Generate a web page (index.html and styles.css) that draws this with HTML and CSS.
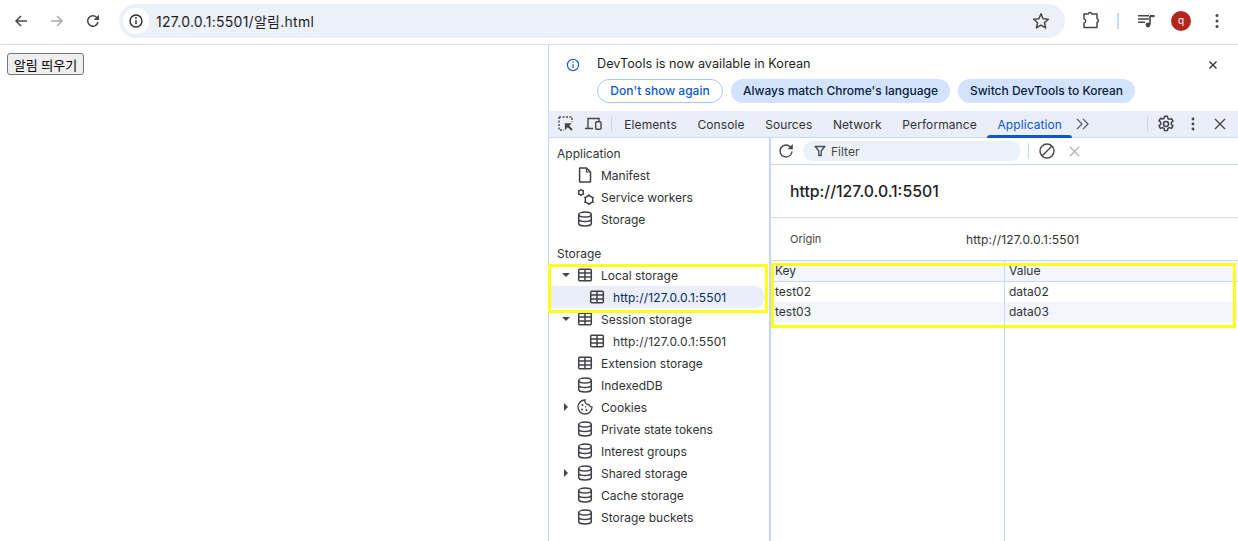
FILE: index.html
```html
<!DOCTYPE html>
<html lang="ko">
<head>
<meta charset="utf-8">
<title>알림</title>
<link rel="stylesheet" href="styles.css">
</head>
<body>
<svg class="defs" width="0" height="0" aria-hidden="true">
  <symbol id="db" viewBox="0 0 16 16"><g fill="none" stroke="#3f4145" stroke-width="1.500"><ellipse cx="8" cy="3.600" rx="6.300" ry="2.500"/><path d="M1.700 3.600v8.800c0 1.300 2.800 2.500 6.300 2.500s6.300-1.200 6.300-2.500V3.600M1.700 8c0 1.400 2.800 2.500 6.300 2.500s6.300-1.100 6.300-2.500"/></g></symbol>
  <symbol id="grid" viewBox="0 0 16 16"><g fill="none" stroke="#3f4145" stroke-width="1.500"><rect x="1.700" y="2.200" width="12.600" height="11.600" rx="1"/><path d="M1.700 6h12.600M1.700 10h12.600M8 2.200v11.600"/></g></symbol>
</svg>

<header class="toolbar">
  <svg class="nav back" width="16" height="16" viewBox="0 0 16 16"><path d="M14 8H3M8 3 3 8l5 5" fill="none" stroke="#474747" stroke-width="1.500"/></svg>
  <svg class="nav fwd" width="16" height="16" viewBox="0 0 16 16"><path d="M2 8h11M8 3l5 5-5 5" fill="none" stroke="#a8abb0" stroke-width="1.500"/></svg>
  <svg class="nav reload" width="16" height="16" viewBox="0 0 16 16"><path d="M13 9a5.200 5.200 0 1 1-1.300-4.600L13.500 6" fill="none" stroke="#474747" stroke-width="1.500"/><path d="M14 1.700V7H8.700z" fill="#474747"/></svg>
  <div class="omnibox">
    <span class="site-info"><svg width="16" height="16" viewBox="0 0 16 16"><circle cx="8" cy="8" r="6" fill="none" stroke="#2b2d30" stroke-width="1.400"/><path d="M8 7.300v4" stroke="#2b2d30" stroke-width="1.500"/><circle cx="8" cy="5" r=".9" fill="#2b2d30"/></svg></span>
    <span class="url">127.0.0.1:5501/알림.html</span>
    <svg class="star" width="18" height="18" viewBox="0 0 18 18"><path d="m9 1.800 2.100 4.900 5.300.5-4 3.500 1.200 5.200L9 13.200l-4.600 2.700 1.200-5.200-4-3.500 5.300-.5z" fill="none" stroke="#474747" stroke-width="1.500" stroke-linejoin="round"/></svg>
  </div>
  <svg class="ext" width="18" height="18" viewBox="0 0 18 18"><path d="M2 2.500h4.200a2 2 0 0 1 3.800 0h5v4.600a2 2 0 0 1 0 3.800V16H2v-4.200a2.300 2.300 0 0 0 0-4.400z" transform="translate(0 -.5)" fill="none" stroke="#474747" stroke-width="1.500" stroke-linejoin="round"/></svg>
  <span class="tb-sep"></span>
  <svg class="media" width="18" height="16" viewBox="0 0 18 16"><path d="M0 2.800h11M0 6h11M0 9.200h7" stroke="#474747" stroke-width="1.400"/><path d="M12 3v8.500" stroke="#474747" stroke-width="1.600"/><path d="M12 2h4.500v2.200H12z" fill="#474747"/><circle cx="10" cy="12" r="2.400" fill="#474747"/></svg>
  <span class="avatar">q</span>
  <svg class="kebab" width="4" height="16" viewBox="0 0 4 16"><circle cx="2" cy="2.500" r="1.500" fill="#474747"/><circle cx="2" cy="8" r="1.500" fill="#474747"/><circle cx="2" cy="13.500" r="1.500" fill="#474747"/></svg>
</header>

<main class="layout">
  <section class="page"><button class="demo-btn" type="button">알림 띄우기</button></section>

  <section class="devtools">
    <div class="infobar">
      <div class="info-line">
        <svg class="info-icon" width="14" height="14" viewBox="0 0 14 14"><circle cx="7" cy="7" r="5.600" fill="none" stroke="#1f5fd6" stroke-width="1.200"/><path d="M7 6.300v3.700" stroke="#1f5fd6" stroke-width="1.300"/><circle cx="7" cy="4.300" r=".8" fill="#1f5fd6"/></svg>
        <span class="info-text">DevTools is now available in Korean</span>
        <svg class="info-close" width="10" height="10" viewBox="0 0 10 10"><path d="m1.500 1.500 7 7m0-7-7 7" stroke="#303236" stroke-width="1.400"/></svg>
      </div>
      <div class="info-actions">
        <button class="pill outline" type="button">Don't show again</button>
        <button class="pill tonal" type="button">Always match Chrome's language</button>
        <button class="pill tonal" type="button">Switch DevTools to Korean</button>
      </div>
    </div>

    <nav class="tabbar">
      <svg class="tb-icon inspect" width="16" height="16" viewBox="0 0 16 16"><path d="M1 1h13v5M1 1v13h5" fill="none" stroke="#474747" stroke-width="1.400" stroke-dasharray="2 1.500"/><path d="M7 7h7l-2.500 2.500L15 13l-1.500 1.500-3.500-3.500L7 14z" fill="#474747" transform="translate(0 .5) scale(.98)"/></svg>
      <svg class="tb-icon device" width="17" height="16" viewBox="0 0 17 16"><path d="M3 12V2.500h11V5" fill="none" stroke="#474747" stroke-width="1.400"/><path d="M0 12.500h8" stroke="#474747" stroke-width="1.500"/><rect x="10.700" y="5.700" width="5.300" height="7.600" rx="1" fill="none" stroke="#474747" stroke-width="1.400"/></svg>
      <span class="tab-sep"></span>
      <span class="tab">Elements</span>
      <span class="tab">Console</span>
      <span class="tab">Sources</span>
      <span class="tab">Network</span>
      <span class="tab">Performance</span>
      <span class="tab active">Application</span>
      <svg class="more" width="13" height="12" viewBox="0 0 13 12"><path d="m1 1 5 5-5 5M7 1l5 5-5 5" fill="none" stroke="#5b5e63" stroke-width="1.300"/></svg>
      <span class="tab-right">
        <span class="tab-sep"></span>
        <svg class="gear" width="18" height="18" viewBox="0 0 16 16"><circle cx="8" cy="8" r="2.200" fill="none" stroke="#3f4145" stroke-width="1.400"/><path d="M6.700 1.200h2.600l.4 2 1.300.7 1.900-.7 1.300 2.300-1.500 1.300v1.500l1.500 1.300-1.300 2.300-1.900-.7-1.300.7-.4 2H6.700l-.4-2-1.300-.7-1.900.7-1.300-2.300 1.500-1.300V6.500L1.800 5.200l1.300-2.300 1.900.7 1.300-.7z" fill="none" stroke="#3f4145" stroke-width="1.300" stroke-linejoin="round"/></svg>
        <svg class="dt-kebab" width="4" height="14" viewBox="0 0 4 14"><circle cx="2" cy="2" r="1.400" fill="#474747"/><circle cx="2" cy="7" r="1.400" fill="#474747"/><circle cx="2" cy="12" r="1.400" fill="#474747"/></svg>
        <svg class="dt-close" width="12" height="12" viewBox="0 0 12 12"><path d="m1 1 10 10M11 1 1 11" stroke="#474747" stroke-width="1.400"/></svg>
      </span>
    </nav>

    <div class="panel">
      <aside class="sidebar">
        <div class="group-title">Application</div>
        <div class="row"><span class="arrow"></span><svg class="ri" width="16" height="16" viewBox="0 0 16 16"><path d="M2.600 1h6.900l4 4v10h-10.900z" fill="none" stroke="#3f4145" stroke-width="1.500" stroke-linejoin="round"/><path d="M9.500 1v4h4" fill="none" stroke="#3f4145" stroke-width="1.200"/></svg><span>Manifest</span></div>
        <div class="row"><span class="arrow"></span><svg class="ri" width="16" height="16" viewBox="0 0 16 16"><path d="M4 .9 6.300 2.200v2.600L4 6.100 1.700 4.800V2.200zM12 6.500l3.700 2.100v4.300L12 15l-3.700-2.100V8.600z" fill="none" stroke="#3f4145" stroke-width="1.500" stroke-linejoin="round"/><path d="M4 0v1M4 6v1M1 1.500l1 .6M6 4.900l1 .6M7 1.500l-1 .6M2 4.900l-1 .6M12 5v1.500M12 15v1M7 8l1.300.7M15.700 12.900 17 13.600M17 8l-1.300.7M8.300 12.900 7 13.600" stroke="#3f4145" stroke-width="1"/></svg><span>Service workers</span></div>
        <div class="row"><span class="arrow"></span><svg class="ri" width="16" height="16"><use href="#db"/></svg><span>Storage</span></div>
        <div class="group-title second">Storage</div>
        <div class="row"><span class="arrow down"></span><svg class="ri" width="16" height="16"><use href="#grid"/></svg><span>Local storage</span></div>
        <div class="row child selected"><svg class="ri" width="16" height="16"><use href="#grid"/></svg><span class="num">http://127.0.0.1:5501</span></div>
        <div class="row"><span class="arrow down"></span><svg class="ri" width="16" height="16"><use href="#grid"/></svg><span>Session storage</span></div>
        <div class="row child"><svg class="ri" width="16" height="16"><use href="#grid"/></svg><span class="num">http://127.0.0.1:5501</span></div>
        <div class="row"><span class="arrow"></span><svg class="ri" width="16" height="16"><use href="#grid"/></svg><span>Extension storage</span></div>
        <div class="row"><span class="arrow"></span><svg class="ri" width="16" height="16"><use href="#db"/></svg><span>IndexedDB</span></div>
        <div class="row"><span class="arrow right"></span><svg class="ri" width="16" height="16" viewBox="0 0 16 16"><path d="M8 1a7 7 0 1 0 7 7 3 3 0 0 1-3-2.500A3.500 3.500 0 0 1 8 1z" fill="none" stroke="#3f4145" stroke-width="1.300"/><circle cx="5.500" cy="6" r="1" fill="#3f4145"/><circle cx="5" cy="10.500" r="1" fill="#3f4145"/><circle cx="9.500" cy="11" r="1" fill="#3f4145"/><circle cx="8.500" cy="7.700" r=".7" fill="#3f4145"/></svg><span>Cookies</span></div>
        <div class="row"><span class="arrow"></span><svg class="ri" width="16" height="16"><use href="#db"/></svg><span>Private state tokens</span></div>
        <div class="row"><span class="arrow"></span><svg class="ri" width="16" height="16"><use href="#db"/></svg><span>Interest groups</span></div>
        <div class="row"><span class="arrow right"></span><svg class="ri" width="16" height="16"><use href="#db"/></svg><span>Shared storage</span></div>
        <div class="row"><span class="arrow"></span><svg class="ri" width="16" height="16"><use href="#db"/></svg><span>Cache storage</span></div>
        <div class="row"><span class="arrow"></span><svg class="ri" width="16" height="16"><use href="#db"/></svg><span>Storage buckets</span></div>
      </aside>

      <div class="content">
        <div class="subbar">
          <svg width="16" height="16" viewBox="0 0 16 16"><path d="M14 8.500a6 6 0 1 1-1.600-4.600L14 5.500" fill="none" stroke="#474747" stroke-width="1.400"/><path d="M14.800 1v5.300H9.500z" fill="#474747"/></svg>
          <div class="filter">
            <svg width="12" height="12" viewBox="0 0 12 12"><path d="M1.200 1.500h9.600L7.200 6v4.500H4.800V6z" fill="none" stroke="#474747" stroke-width="1.300" stroke-linejoin="round"/></svg>
            <span>Filter</span>
          </div>
          <span class="tab-sep"></span>
          <svg class="clear" width="16" height="16" viewBox="0 0 16 16"><circle cx="8" cy="8" r="7" fill="none" stroke="#474747" stroke-width="1.400"/><path d="m3 13 10-10" stroke="#474747" stroke-width="1.400"/></svg>
          <svg class="del" width="11" height="11" viewBox="0 0 11 11"><path d="m.8.800 9.400 9.400m0-9.400L.8 10.200" stroke="#b4b6ba" stroke-width="1.400"/></svg>
        </div>
        <div class="origin-title">http://127.0.0.1:5501</div>
        <div class="origin-row"><span class="origin-label">Origin</span><span class="origin-value num">http://127.0.0.1:5501</span></div>
        <div class="grid">
          <div class="grid-row head"><span>Key</span><span>Value</span></div>
          <div class="grid-row"><span>test02</span><span>data02</span></div>
          <div class="grid-row alt"><span>test03</span><span>data03</span></div>
          <div class="grid-fill"><span></span><span></span></div>
        </div>
      </div>
    </div>
  </section>
</main>

<div class="mark mark-left"></div>
<div class="mark mark-right"></div>
</body>
</html>
```
FILE: styles.css
```css
* { box-sizing: border-box; }
html, body { margin: 0; height: 541px; overflow: hidden; background: #fff; }
body { font-family: Inter, "Noto Sans CJK KR", sans-serif; font-size: 12px; color: #1f1f1f; position: relative; }
.defs { position: absolute; }
svg { flex: none; display: block; overflow: visible; }
.num { letter-spacing: .15px; }

.toolbar { height: 45px; border-bottom: 1px solid #dadce0; display: flex; align-items: center; padding: 0 0 2px 13px; }
.nav.fwd { margin-left: 20px; }
.nav.reload { margin-left: 20px; }
.omnibox { margin-left: 18px; width: 946px; height: 34px; border-radius: 17px; background: #ebf0f9; display: flex; align-items: center; padding: 0 15px 0 4px; }
.site-info { width: 26px; height: 26px; border-radius: 50%; background: #fff; display: flex; align-items: center; justify-content: center; }
.url { margin-left: 7px; font-size: 14px; letter-spacing: .27px; color: #1f1f1f; flex: 1; }
.ext { margin-left: 17px; }
.tb-sep { width: 2px; height: 16px; background: #c8dafa; margin-left: 17px; }
.media { margin-left: 19px; }
.avatar { width: 20px; height: 20px; margin-left: 15px; border-radius: 50%; background: #b3261e; color: #fff; font-size: 10px; display: flex; align-items: center; justify-content: center; padding-bottom: 2px; }
.kebab { margin-left: 24px; }

.layout { display: flex; height: 496px; }
.page { width: 548px; padding: 8px 7px; }
.demo-btn { display: block; width: 77px; height: 22px; padding: 0; font-family: Inter, "Noto Sans CJK KR", sans-serif; font-size: 13px; color: #000; background: #efefef; border: 1px solid #767676; border-radius: 3px; }

.devtools { flex: 1; min-width: 0; border-left: 1px solid #c6d8f7; display: flex; flex-direction: column; }
.infobar { height: 66px; padding: 9px 0 0 48px; position: relative; flex: none; }
.info-line { display: flex; align-items: center; height: 18px; font-size: 12.7px; }
.info-icon { position: absolute; left: 17px; top: 13px; }
.info-close { position: absolute; right: 20px; top: 15px; }
.info-actions { display: flex; gap: 8px; margin-top: 7px; }
.pill { height: 24px; border-radius: 12px; font: 500 12px Inter, sans-serif; padding: 0 0 2px; border: 0; }
.pill.outline { width: 126px; background: #fff; color: #0b57d0; border: 1px solid #a8c7fa; }
.pill.tonal { background: #d3e3fd; color: #071d41; }
.pill.tonal:nth-child(2) { width: 219px; }
.pill.tonal:nth-child(3) { width: 177px; }

.tabbar { height: 27px; background: #e9eef8; border-bottom: 1px solid #c6d8f7; display: flex; align-items: center; padding-left: 9px; flex: none; }
.tb-icon.device { margin-left: 11px; }
.tab-sep { width: 1px; height: 16px; background: #c6d8f7; display: block; flex: none; }
.tabbar > .tab-sep { margin: 0 2px 0 9px; }
.tab { padding: 0 10.3px; height: 26px; line-height: 27px; letter-spacing: .09px; color: #303236; position: relative; }
.tab.active { color: #0b57d0; }
.tab.active::after { content: ""; position: absolute; left: 0; right: 0; bottom: -1px; height: 3px; background: #0b57d0; border-radius: 3px 3px 0 0; }
.more { margin-left: 4px; }
.tab-right { margin-left: auto; display: flex; align-items: center; padding-right: 12px; }
.gear { margin-left: 9px; }
.dt-kebab { margin-left: 16px; }
.dt-close { margin-left: 19px; }

.panel { flex: 1; display: flex; min-height: 0; }
.sidebar { width: 222px; flex: none; border-right: 2px solid #c6d8f7; padding-top: 5px; }
.group-title { height: 21px; line-height: 21px; padding-left: 8px; color: #303236; }
.group-title.second { margin-top: 13px; }
.row { height: 22px; display: flex; align-items: center; position: relative; color: #303236; white-space: nowrap; }
.arrow { width: 28px; flex: none; position: relative; height: 22px; }
.arrow.down::after { content: ""; position: absolute; left: 13px; top: 9px; border: 4px solid transparent; border-top: 4px solid #474747; border-bottom: 0; }
.arrow.right::after { content: ""; position: absolute; left: 15px; top: 7px; border: 4px solid transparent; border-left: 4px solid #474747; border-right: 0; }
.row .ri { margin-right: 8px; }
.row.child { padding-left: 40px; }
.row.selected { background: #e9eef8; border-radius: 0 11px 11px 0; margin-right: 4px; color: #0a2a5e; }

.content { flex: 1; min-width: 0; display: flex; flex-direction: column; }
.subbar { height: 27px; border-bottom: 1px solid #c6d8f7; display: flex; align-items: center; padding-left: 7px; flex: none; }
.filter { margin-left: 9px; width: 218px; height: 20px; border-radius: 10px; background: #ebf0f9; display: flex; align-items: center; gap: 5px; padding-left: 11px; color: #474747; }
.subbar .tab-sep { margin-left: 7px; }
.clear { margin-left: 10px; }
.del { margin-left: 14px; }
.origin-title { height: 53px; border-bottom: 1px solid #d6dde9; padding-left: 19px; line-height: 54px; font-size: 15.8px; font-weight: 500; flex: none; }
.origin-row { height: 43px; border-bottom: 1px solid #c6d8f7; display: flex; align-items: center; flex: none; font-size: 12px; }
.origin-label { width: 195px; padding-left: 19px; font-size: 11px; color: #474747; }
.origin-value { color: #303236; }
.grid { flex: 1; display: flex; flex-direction: column; min-height: 0; }
.grid-row, .grid-fill { display: grid; grid-template-columns: 234px 1fr; }
.grid-row > span { padding-left: 4px; line-height: 20px; height: 20px; color: #303236; }
.grid-row > span:first-child, .grid-fill > span:first-child { border-right: 1px solid #c6d8f7; }
.grid-row.head { height: 21px; background: #f3f6fd; border-bottom: 1px solid #c6d8f7; }
.grid-row.head > span { line-height: 19px; }
.grid-row.alt { background: #f3f6fd; }
.grid-fill { flex: 1; }

.mark { position: absolute; border: 3px solid #ffff1e; }
.mark-left { left: 548px; top: 264px; width: 220px; height: 49px; }
.mark-right { left: 771px; top: 263px; width: 465px; height: 65px; }
```
